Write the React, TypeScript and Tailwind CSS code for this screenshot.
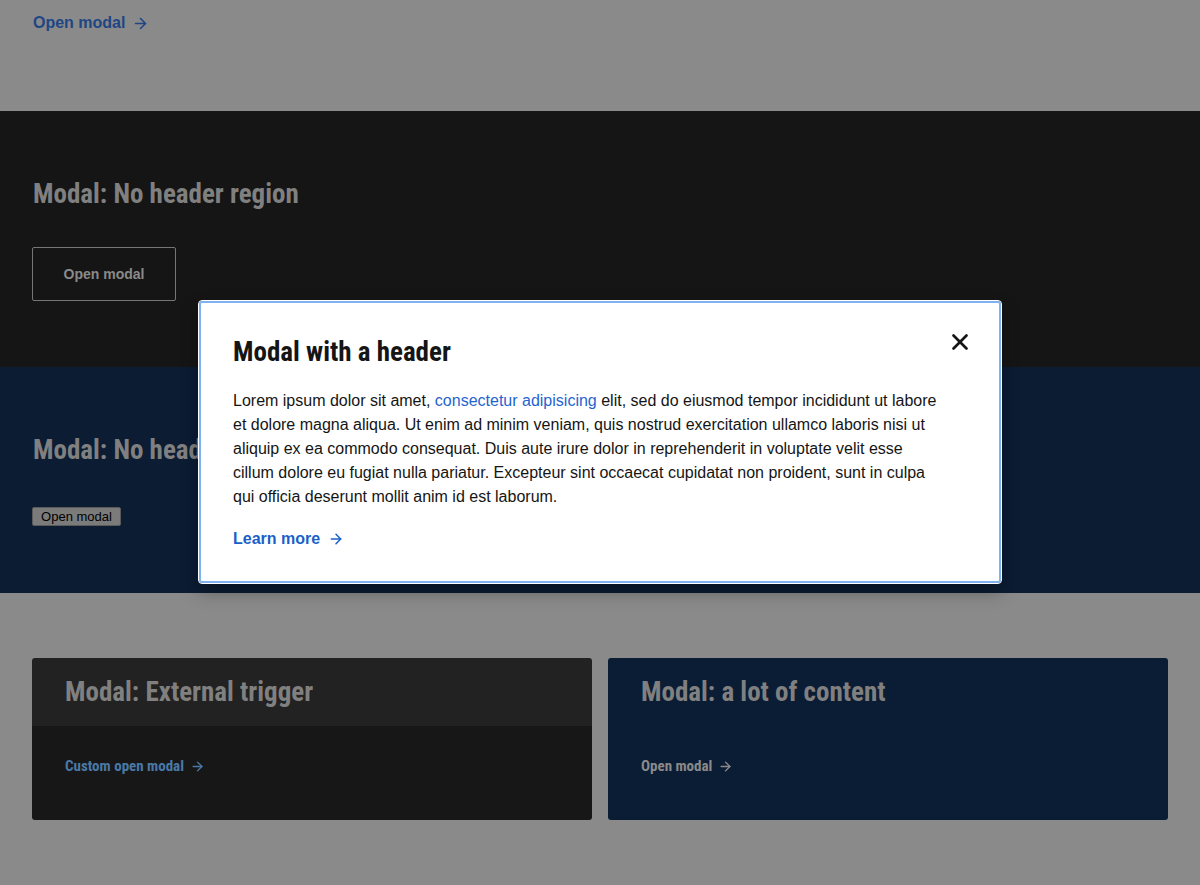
import { ArrowRight, X } from "lucide-react";

const narrow = "font-['Liberation_Sans_Narrow','Roboto_Condensed','Roboto',sans-serif]";
const sans = "font-['Liberation_Sans',Arial,sans-serif]";

function Heading({ children }: { children: React.ReactNode }) {
  return (
    <h2 className={`${narrow} text-[27px] leading-[30px] font-bold text-[#808080]`}>
      {children}
    </h2>
  );
}

export default function App() {
  return (
    <div className={`${sans} relative min-h-[885px] bg-[#8a8a8a] overflow-hidden`}>
      {/* Basic example (scrolled) */}
      <section className="h-[111px] px-[33px] pt-[11px]">
        <a className="inline-flex items-center gap-[7px] text-[16px] leading-[22px] font-bold text-[#1f4684]">
          Open modal
          <ArrowRight size={17} strokeWidth={2.25} />
        </a>
      </section>

      {/* No header region */}
      <section className="h-[256px] bg-[#151515] px-[33px] pt-[68px]">
        <Heading>Modal: No header region</Heading>
        <button className="-ml-px mt-[38px] flex h-[54px] w-[144px] items-center justify-center rounded-[2px] border border-[#767676] text-[14px] font-bold text-[#8a8a8a]">
          Open modal
        </button>
      </section>

      {/* No header, default trigger */}
      <section className="h-[226px] bg-[#0b1c33] px-[33px] pt-[68px]">
        <Heading>Modal: No header or footer</Heading>
        <button className="-ml-px mt-[42px] h-[19px] w-[89px] rounded-[2px] border border-[#5a5a5a] bg-[#7b7b7b] text-[13px] leading-[17px] text-black font-['Liberation_Sans',Arial,sans-serif]">
          Open modal
        </button>
      </section>

      {/* Cards */}
      <section className="grid grid-cols-2 gap-4 px-8 pt-[65px] pb-[65px]">
        <div className="overflow-hidden rounded-[3px]">
          <div className="flex h-[68px] items-center bg-[#222222] px-[33px]">
            <Heading>Modal: External trigger</Heading>
          </div>
          <div className="h-[94px] bg-[#171717] px-[33px] pt-[28px]">
            <a className={`${narrow} inline-flex items-center gap-[6px] text-[15px] leading-[20px] font-bold text-[#4a79a7]`}>
              Custom open modal
              <ArrowRight size={15} strokeWidth={2.25} />
            </a>
          </div>
        </div>
        <div className="overflow-hidden rounded-[3px] bg-[#0b1d34]">
          <div className="flex h-[68px] items-center px-[33px]">
            <Heading>Modal: a lot of content</Heading>
          </div>
          <div className="h-[94px] px-[33px] pt-[28px]">
            <a className={`${narrow} inline-flex items-center gap-[6px] text-[15px] leading-[20px] font-bold text-[#8a8a8a]`}>
              Open modal
              <ArrowRight size={15} strokeWidth={2.25} />
            </a>
          </div>
        </div>
      </section>

      {/* Modal */}
      <div
        role="dialog"
        className="absolute left-[199px] top-[301px] h-[282px] w-[802px] rounded-[3px] border-2 border-[#7fb2f0] bg-white shadow-[0_8px_18px_rgba(0,0,0,0.35)] outline outline-1 outline-white"
      >
        <div className="flex items-start justify-between pl-[32px] pr-[26px] pt-[34px]">
          <h1 className={`${narrow} text-[27px] leading-[30px] font-bold text-[#151515]`}>
            Modal with a header
          </h1>
          <button aria-label="Close" className="-mt-[8px] text-[#151515]">
            <X size={26} strokeWidth={2.5} />
          </button>
        </div>
        <p className="mt-[22px] w-[708px] pl-[32px] box-content text-[16px] leading-[24px] text-[#151515]">
          Lorem ipsum dolor sit amet,{" "}
          <a className="text-[#1f64d0]">consectetur adipisicing</a> elit, sed do eiusmod tempor
          incididunt ut labore et dolore magna aliqua. Ut enim ad minim veniam, quis nostrud
          exercitation ullamco laboris nisi ut aliquip ex ea commodo consequat. Duis aute irure
          dolor in reprehenderit in voluptate velit esse cillum dolore eu fugiat nulla pariatur.
          Excepteur sint occaecat cupidatat non proident, sunt in culpa qui officia deserunt
          mollit anim id est laborum.
        </p>
        <a className="ml-[32px] mt-[19px] inline-flex items-center gap-[8px] text-[16px] leading-[22px] font-bold text-[#1a5fc9]">
          Learn more
          <ArrowRight size={16} strokeWidth={2.25} />
        </a>
      </div>
    </div>
  );
}
